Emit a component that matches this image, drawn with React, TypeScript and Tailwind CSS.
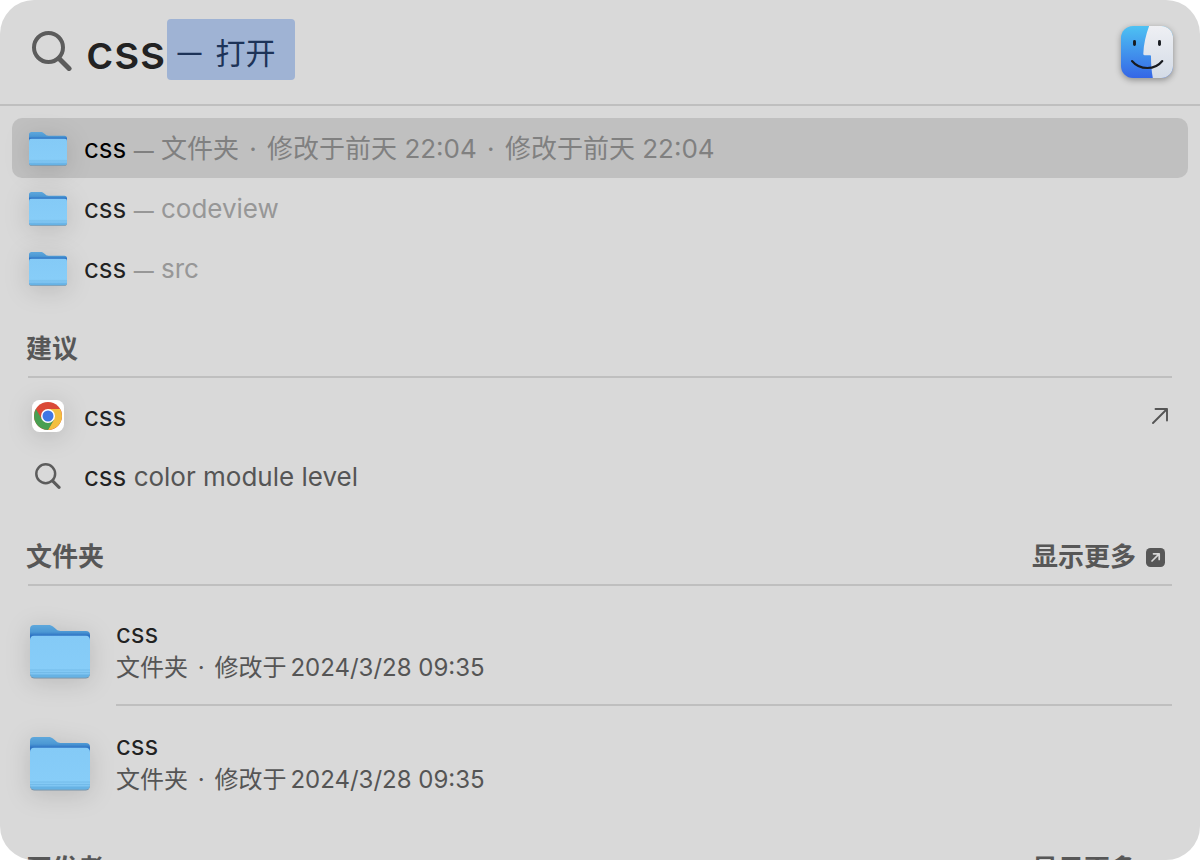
import { Fragment, useId, useState, type ReactNode } from "react";

type FolderHit = { id: number; parts: string[] };

const FOLDER_HITS: FolderHit[] = [
  { id: 1, parts: ["文件夹", "修改于前天 22:04", "修改于前天 22:04"] },
  { id: 2, parts: ["codeview"] },
  { id: 3, parts: ["src"] },
];

const FOLDERS = [
  { id: 1, name: "css", date: "2024/3/28 09:35" },
  { id: 2, name: "css", date: "2024/3/28 09:35" },
];

const iconShadow = "drop-shadow-[0_4px_12px_rgba(0,0,0,0.14)]";

function SearchIcon({ className, stroke }: { className: string; stroke: number }) {
  return (
    <svg viewBox="0 0 40 40" fill="none" stroke="currentColor" className={className} aria-hidden="true">
      <circle cx="16.5" cy="16.5" r="14.5" strokeWidth={stroke} />
      <path d="M27 27.5 37 37.5" strokeWidth={stroke + 1} strokeLinecap="round" />
    </svg>
  );
}

function FolderIcon({ className }: { className: string }) {
  const id = useId();
  return (
    <svg viewBox="0 -3 60 57" className={`${className} ${iconShadow}`} aria-hidden="true">
      <defs>
        <linearGradient id={`${id}b`} x1="0" y1="0" x2="0" y2="1">
          <stop offset="0" stopColor="#5ea8dc" />
          <stop offset="0.35" stopColor="#4c98d4" />
          <stop offset="0.52" stopColor="#2f74c4" />
        </linearGradient>
        <linearGradient id={`${id}f`} x1="0" y1="0" x2="0" y2="1">
          <stop offset="0" stopColor="#84caf6" />
          <stop offset="0.8" stopColor="#87cdf8" />
          <stop offset="1" stopColor="#79bfee" />
        </linearGradient>
        <clipPath id={`${id}c`}>
          <rect y="10.5" width="60" height="42" rx="4.5" />
        </clipPath>
      </defs>
      <rect y="12" width="60" height="41.500" rx="4.500" fill="#7690a5" />
      <path
        d="M0 4a4 4 0 0 1 4-4h14.500c2 0 3.200.500 4.500 1.600l3.500 3C27.700 5.600 28.700 6 30.500 6H56a4 4 0 0 1 4 4v10H0Z"
        fill={`url(#${id}b)`}
      />
      <g clipPath={`url(#${id}c)`}>
        <rect y="10.5" width="60" height="42" fill={`url(#${id}f)`} />
        <rect y="49.500" width="60" height="4" fill="#66b2e4" />
        <path d="M0 45h60M0 47.500h60" stroke="#70b7e6" strokeWidth="0.800" />
      </g>
    </svg>
  );
}

function FinderIcon() {
  return (
    <svg viewBox="0 0 52 52" className="size-13 overflow-visible drop-shadow-[0_2px_3px_rgba(0,0,0,0.35)]" role="img" aria-label="访达">
      <defs>
        <linearGradient id="finder-blue" x1="0" y1="0" x2="0" y2="1">
          <stop offset="0" stopColor="#4ec2f3" />
          <stop offset="1" stopColor="#3566e6" />
        </linearGradient>
        <linearGradient id="finder-face" x1="0" y1="0" x2="0" y2="1">
          <stop offset="0" stopColor="#eff0f4" />
          <stop offset="1" stopColor="#d3dbe6" />
        </linearGradient>
        <clipPath id="finder-clip">
          <rect width="52" height="52" rx="12" />
        </clipPath>
      </defs>
      <g clipPath="url(#finder-clip)">
        <rect width="52" height="52" fill="url(#finder-blue)" />
        <path
          d="M28.500-1C25 8 22.600 18 22.300 28c0 .800.400 1.200 1.200 1.200h5.300c.800 0 1.200.400 1.200 1.200 0 7.600.600 15 2 22.600h21V-1Z"
          fill="url(#finder-face)"
        />
      </g>
      <g fill="none" stroke="#181b20" strokeLinecap="round">
        <path d="M13.500 15.500v3M38.500 15.500v3" strokeWidth="2.900" />
        <path d="M11 35c4 4.800 9.500 7 15.300 7S37.500 39.800 41.300 35" strokeWidth="2.100" />
      </g>
    </svg>
  );
}

function ChromeIcon() {
  return (
    <svg viewBox="0 0 32 32" className={`size-8 overflow-visible ${iconShadow}`} aria-hidden="true">
      <rect width="32" height="32" rx="7.500" fill="#fff" />
      <circle cx="16" cy="16" r="14" fill="#da4937" />
      <path d="M16 9h12.100A14 14 0 0 1 16 30l6-10.500Z" fill="#f3bf41" />
      <path d="M3.900 9A14 14 0 0 0 16 30l6.100-10.500-6.100 3.500-6-3.500Z" fill="#489f51" />
      <circle cx="16" cy="16" r="7" fill="#fff" />
      <circle cx="16" cy="16" r="5.500" fill="#3f76e4" />
    </svg>
  );
}

function ArrowIcon() {
  return (
    <svg viewBox="0 0 16 16" className="mr-1 size-4 text-[#555]" fill="none" stroke="currentColor" strokeWidth="1.900" aria-hidden="true">
      <path d="M1 15 15 1M3.500 1H15v11.500" strokeLinecap="round" strokeLinejoin="round" />
    </svg>
  );
}

function MoreIcon() {
  return (
    <svg viewBox="0 0 19 19" className="size-[19px]" fill="none" aria-hidden="true">
      <rect width="19" height="19" rx="4.500" fill="#575757" />
      <path d="M6 13l6.700-6.700M7.500 5.800h5.700v5.700" stroke="#d9d9d9" strokeWidth="1.700" strokeLinecap="round" strokeLinejoin="round" />
    </svg>
  );
}

function Dot() {
  return <span className="mx-[3px]"> · </span>;
}

function SectionHeader({ title, more }: { title: string; more?: boolean }) {
  return (
    <div className="mx-4 flex h-20 items-end justify-between border-b-2 border-[#bfbfbf] pb-[9px] text-[26px] leading-9 font-bold text-[#575757]">
      <h2 className="-ml-0.5">{title}</h2>
      {more && (
        <button type="button" className="mr-[7px] flex items-center gap-2.5">
          显示更多
          <MoreIcon />
        </button>
      )}
    </div>
  );
}

function Row({ icon, selected, children }: { icon: ReactNode; selected?: boolean; children: ReactNode }) {
  return (
    <li className={`flex h-15 items-center rounded-[10px] px-4 text-[26px] leading-9 ${selected ? "bg-[#c0c0c0]" : ""}`}>
      <span className="mr-4 flex w-10 shrink-0 justify-center">{icon}</span>
      {children}
    </li>
  );
}

export default function App() {
  const [query, setQuery] = useState("css");

  return (
    <div className="h-screen bg-white">
      <main className="flex h-full flex-col overflow-hidden rounded-[34px] bg-[#d9d9d9] font-[Inter,'Noto_Sans_CJK_SC',sans-serif] text-[#222]">
        <header className="flex h-[106px] shrink-0 items-center border-b-2 border-[#bfbfbf] pr-[27px] pl-8">
          <SearchIcon className="mr-3.5 mb-0.5 size-10 shrink-0 text-[#5c5c5c]" stroke={4} />
          <input
            type="text"
            aria-label="聚焦搜索"
            value={query}
            onChange={(e) => setQuery(e.target.value)}
            className="field-sizing-content bg-transparent text-[48px] leading-15 font-medium outline-none"
          />
          <span className="mb-1.5 ml-0.5 flex h-[61px] items-center gap-3.5 rounded bg-[#9fb3d4] pt-2 pr-5 pl-2.5 text-[30px] text-[#1d3358]">
            <span className="text-2xl font-medium">—</span>
            <span>打开</span>
          </span>
          <div className="ml-auto shrink-0">
            <FinderIcon />
          </div>
        </header>

        <div className="min-h-0 flex-1 overflow-hidden px-3 pt-3">
          <ul>
            {FOLDER_HITS.map((hit, i) => (
              <Row key={hit.id} selected={i === 0} icon={<FolderIcon className="w-[38px]" />}>
                <p className={`pt-0.5 ${i === 0 ? "text-[#808080]" : "text-[#979797]"}`}>
                  <span className={i === 0 ? "text-black" : "text-[#222]"}>css</span>{" "}
                  <span className="text-xl font-medium">—</span>{" "}
                  {hit.parts.map((part, n) => (
                    <Fragment key={n}>
                      {n > 0 && <Dot />}
                      {part}
                    </Fragment>
                  ))}
                </p>
              </Row>
            ))}
          </ul>

          <section>
            <SectionHeader title="建议" />
            <ul className="pt-2">
              <Row icon={<ChromeIcon />}>
                <p className="flex-1 pt-0.5">css</p>
                <ArrowIcon />
              </Row>
              <Row icon={<SearchIcon className="size-[26px] text-[#5c5c5c]" stroke={3.8} />}>
                <p className="pt-0.5 text-[#555]">
                  <span className="text-[#222]">css</span> color module level
                </p>
              </Row>
            </ul>
          </section>

          <section>
            <SectionHeader title="文件夹" more />
            <ul className="px-4 pt-2">
              {FOLDERS.map((folder, i) => (
                <li key={folder.id} className="flex h-28 items-stretch">
                  <span className="mr-6 flex w-16 shrink-0 items-center justify-center">
                    <FolderIcon className="w-[60px]" />
                  </span>
                  <div
                    className={`flex flex-1 flex-col justify-center gap-0.5 border-b-2 pt-1 text-2xl leading-8 ${
                      i < FOLDERS.length - 1 ? "border-[#bfbfbf]" : "border-transparent"
                    }`}
                  >
                    <p className="text-[26px] leading-8">{folder.name}</p>
                    <p className="text-[#555]">
                      文件夹
                      <Dot />
                      修改于<span className="ml-1">{folder.date}</span>
                    </p>
                  </div>
                </li>
              ))}
            </ul>
          </section>

          <section>
            <SectionHeader title="开发者" more />
          </section>
        </div>
      </main>
    </div>
  );
}
